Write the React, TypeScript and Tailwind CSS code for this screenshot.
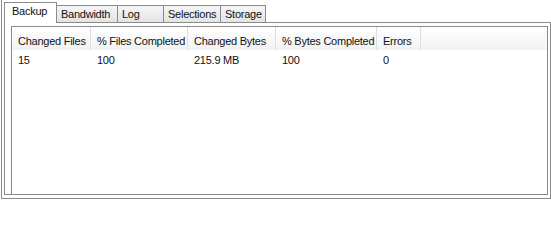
import React from "react";

const tabs = [
  { label: "Bandwidth", w: "w-[61px]" },
  { label: "Log", w: "w-[46px]" },
  { label: "Selections", w: "w-[57px]" },
  { label: "Storage", w: "w-[45px]" },
];

const columns = [
  { title: "Changed Files", value: "15", w: "w-[79px]" },
  { title: "% Files Completed", value: "100", w: "w-[97px]" },
  { title: "Changed Bytes", value: "215.9 MB", w: "w-[88px]" },
  { title: "% Bytes Completed", value: "100", w: "w-[101px]" },
  { title: "Errors", value: "0", w: "w-[44px]" },
];

const App = () => {
  return (
    <div className="w-[551px] h-[202px] bg-white pl-px overflow-hidden font-['Liberation_Sans',Arial,sans-serif] text-[11px] leading-[13px] tracking-[-0.25px] text-[#111]">
      <div className="w-[550px] h-[199px] border-l border-b border-[#8a8a8a] flex flex-col pl-[2px]">
        {/* tab strip */}
        <div className="h-[22px] flex items-end shrink-0">
          <div className="relative z-10 w-[53px] h-[21px] -mb-px border-l border-t border-r border-[#8a8a8a] bg-white pl-[7px] pt-[2px]">
            Backup
          </div>
          {tabs.map((tab) => (
            <div
              key={tab.label}
              className={`${tab.w} h-[17px] border-t border-r border-[#8a8a8a] bg-gradient-to-b from-[#f6f6f6] to-[#e4e4e4] pl-[4px] pt-[2px] whitespace-nowrap overflow-hidden`}
            >
              {tab.label}
            </div>
          ))}
        </div>

        {/* tab page */}
        <div className="flex-1 flex border-t border-r border-[#8a8a8a] pr-[2px] pb-[3px]">
          <div className="flex-1 flex flex-col border-l border-b border-[#8a8a8a] pl-[6px] pt-[3px]">
            <div className="flex-1 flex flex-col border-l border-t border-r border-[#8a8a8a] bg-white">
              <div className="h-[23px] flex bg-gradient-to-b from-white to-[#f1f2f4]">
                {columns.map((col) => (
                  <div
                    key={col.title}
                    className={`${col.w} shrink-0 border-r border-[#dedede] pl-[6px] pt-[8px] whitespace-nowrap overflow-hidden`}
                  >
                    {col.title}
                  </div>
                ))}
              </div>
              <div className="h-[17px] flex pt-[4px]">
                {columns.map((col) => (
                  <div key={col.title} className={`${col.w} shrink-0 pl-[6px] whitespace-nowrap`}>
                    {col.value}
                  </div>
                ))}
              </div>
            </div>
          </div>
        </div>
      </div>
    </div>
  );
};

export default App;
